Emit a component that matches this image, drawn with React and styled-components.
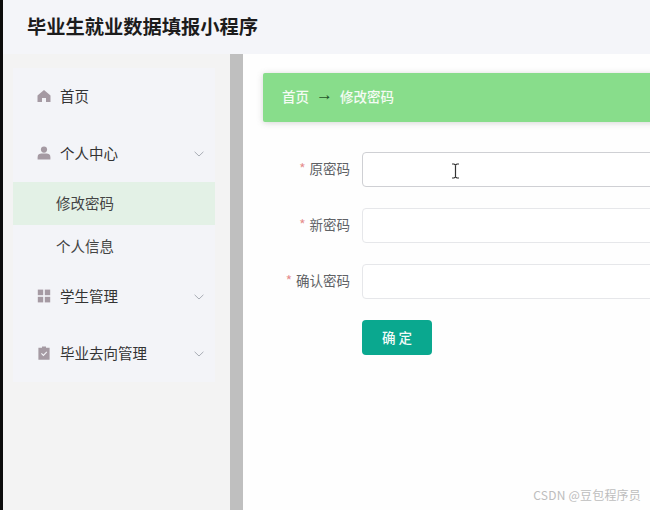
import React from 'react';
import styled, { createGlobalStyle } from 'styled-components';

const GlobalStyle = createGlobalStyle`
  html, body {
    margin: 0;
    padding: 0;
    height: 100%;
    overflow: hidden;
    background: #fff;
  }
  body {
    font-family: "Noto Sans CJK SC", "Liberation Sans", sans-serif;
  }
  #root {
    height: 100%;
  }
`;

const menu = [
  { label: '首页', icon: 'home' },
  { label: '个人中心', icon: 'user', arrow: true, children: [
    { label: '修改密码', active: true },
    { label: '个人信息' },
  ] },
  { label: '学生管理', icon: 'grid', arrow: true },
  { label: '毕业去向管理', icon: 'clipboard', arrow: true },
];

const fields = [
  { label: '原密码', hover: true },
  { label: '新密码' },
  { label: '确认密码' },
];

const MenuIcon = ({ name }) => {
  if (name === 'home') {
    return (
      <IconSvg viewBox="0 0 14 14">
        <path d="M7 1 L13.5 6.6 V13 H9 V9 H5 V13 H.5 V6.6 Z" />
      </IconSvg>
    );
  }
  if (name === 'user') {
    return (
      <IconSvg viewBox="0 0 14 14">
        <circle cx="7" cy="3.6" r="3.1" />
        <path d="M.6 13.4 V11 C.6 8.6 2.6 7.6 4.4 7.6 H9.6 C11.4 7.6 13.4 8.6 13.4 11 V13.4 Z" />
      </IconSvg>
    );
  }
  if (name === 'grid') {
    return (
      <IconSvg viewBox="0 0 14 14">
        <rect x=".8" y=".6" width="5.4" height="5.6" />
        <rect x="7.8" y=".6" width="5.4" height="5.6" />
        <rect x=".8" y="7.8" width="5.4" height="5.6" />
        <rect x="7.8" y="7.8" width="5.4" height="5.6" />
      </IconSvg>
    );
  }
  return (
    <IconSvg viewBox="0 0 14 14">
      <path d="M5 .4 H9 V1.8 H12.6 V13.8 H1.4 V1.8 H5 Z" />
      <path d="M4.4 7.4 L6.4 9.4 L9.8 5.8" fill="none" stroke="#f3f4f8" strokeWidth="1.1" />
    </IconSvg>
  );
};

const Arrow = () => (
  <ArrowSvg viewBox="0 0 10 6">
    <path d="M.6 .8 L5 5 L9.4 .8" />
  </ArrowSvg>
);

const App = () => (
  <>
    <GlobalStyle />
    <Page>
      <Edge />
      <Shell>
        <Header>
          <Title>毕业生就业数据填报小程序</Title>
        </Header>
        <Body>
          <Sidebar>
            <Menu>
              {menu.map((item) => (
                <li key={item.label}>
                  <MenuRow>
                    <MenuIcon name={item.icon} />
                    <MenuLabel>{item.label}</MenuLabel>
                    {item.arrow && <Arrow />}
                  </MenuRow>
                  {item.children &&
                    item.children.map((child) => (
                      <SubRow key={child.label} $active={child.active}>
                        {child.label}
                      </SubRow>
                    ))}
                </li>
              ))}
            </Menu>
          </Sidebar>
          <Rail />
          <Main>
            <Banner>
              <Crumb>首页</Crumb>
              <CrumbArrow>→</CrumbArrow>
              <Crumb>修改密码</Crumb>
            </Banner>
            <Form>
              {fields.map((field) => (
                <FormRow key={field.label}>
                  <Label>
                    <Star>*</Star>
                    {field.label}
                  </Label>
                  <InputBox $hover={field.hover}>
                    {field.hover && (
                      <Cursor viewBox="0 0 9 16">
                        <path d="M1 1 H3 L4.5 2 L6 1 H8 M4.5 2 V14 M1 15 H3 L4.5 14 L6 15 H8" />
                      </Cursor>
                    )}
                  </InputBox>
                </FormRow>
              ))}
              <Submit type="button">确 定</Submit>
            </Form>
            <Watermark>CSDN @豆包程序员</Watermark>
          </Main>
        </Body>
      </Shell>
    </Page>
  </>
);

const Page = styled.div`
  display: flex;
  width: 650px;
  height: 510px;
  overflow: hidden;
`;

const Edge = styled.div`
  flex: 0 0 3px;
  background: #0c0c0c;
`;

const Shell = styled.div`
  flex: 1;
  min-width: 0;
  display: flex;
  flex-direction: column;
`;

const Header = styled.header`
  flex: 0 0 54px;
  display: flex;
  align-items: center;
  padding: 0 0 3px 24px;
  box-sizing: border-box;
  background: #f4f5f9;
`;

const Title = styled.h1`
  margin: 0;
  font-size: 19.25px;
  line-height: 26px;
  font-weight: 700;
  color: #1c1c1c;
`;

const Body = styled.div`
  flex: 1;
  min-height: 0;
  display: flex;
`;

const Sidebar = styled.aside`
  flex: 0 0 227px;
  box-sizing: border-box;
  padding: 14px 15px 0 10px;
  background: #f3f3f3;
`;

const Menu = styled.ul`
  margin: 0;
  padding: 0;
  list-style: none;
  background: #f3f4f8;
`;

const MenuRow = styled.div`
  height: 57px;
  display: flex;
  align-items: center;
  padding: 0 10px 0 24px;
  color: #333;
  font-size: 14.5px;
`;

const IconSvg = styled.svg`
  width: 14px;
  height: 14px;
  margin-bottom: 2px;
  fill: #a59aa3;
  flex: none;
`;

const MenuLabel = styled.span`
  margin-left: 9px;
  padding-bottom: 2px;
  flex: 1;
  line-height: 20px;
`;

const ArrowSvg = styled.svg`
  width: 10px;
  height: 6px;
  margin-right: 1px;
  fill: none;
  stroke: #a9adb5;
  stroke-width: 1;
  flex: none;
`;

const SubRow = styled.div`
  height: 43px;
  line-height: 41px;
  padding-left: 43px;
  font-size: 14.5px;
  color: #444;
  background: ${(p) => (p.$active ? '#e3f1e6' : 'transparent')};
`;

const Rail = styled.div`
  flex: 0 0 13px;
  background: #bfbfbf;
`;

const Main = styled.main`
  flex: 1;
  min-width: 0;
  position: relative;
  overflow: hidden;
  background: #fefefe;
  padding: 19px 0 0 20px;
`;

const Banner = styled.div`
  width: 700px;
  height: 49px;
  display: flex;
  align-items: center;
  padding-left: 19px;
  box-sizing: border-box;
  border-radius: 2px;
  background: #88dd8b;
  box-shadow: 0 1px 6px rgba(120, 120, 120, 0.3);
`;

const Crumb = styled.span`
  padding-bottom: 3px;
  font-size: 13.5px;
  color: #f4fbf4;
  font-weight: 500;
`;

const CrumbArrow = styled.span`
  margin: 0 7px 6px 7px;
  font-size: 17px;
  line-height: 16px;
  font-family: "Liberation Sans", sans-serif;
  color: #26552a;
`;

const Form = styled.form`
  margin-top: 30px;
  display: flex;
  flex-direction: column;
  gap: 21px;
`;

const FormRow = styled.div`
  display: flex;
  align-items: center;
  gap: 12px;
`;

const Label = styled.label`
  flex: 0 0 87px;
  padding-bottom: 4px;
  text-align: right;
  font-size: 13.5px;
  color: #606266;
`;

const Star = styled.span`
  color: #e58b8b;
  margin-right: 4px;
`;

const InputBox = styled.div`
  position: relative;
  flex: 0 0 600px;
  height: 35px;
  box-sizing: border-box;
  background: #fff;
  border: 1px solid ${(p) => (p.$hover ? '#cfd0d4' : '#e6e7ea')};
  border-radius: 4px;
`;

const Cursor = styled.svg`
  position: absolute;
  left: 88px;
  top: 10px;
  width: 9px;
  height: 16px;
  fill: none;
  stroke: #333;
  stroke-width: 1.2;
`;

const Submit = styled.button`
  align-self: flex-start;
  margin-left: 99px;
  width: 70px;
  height: 35px;
  padding: 0 0 2px;
  border: none;
  border-radius: 4px;
  background: #0aa88f;
  color: #f2fbf9;
  font-family: inherit;
  font-size: 13.5px;
  font-weight: 500;
`;

const Watermark = styled.div`
  position: absolute;
  right: 9px;
  bottom: 7px;
  font-size: 12px;
  line-height: 16px;
  letter-spacing: 0.2px;
  color: #bdbdbd;
`;

export default App;
